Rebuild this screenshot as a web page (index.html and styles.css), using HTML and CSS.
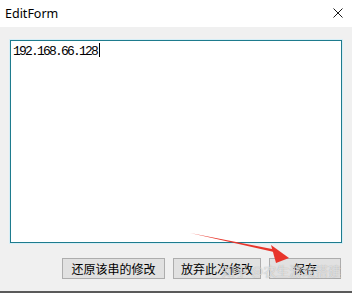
FILE: index.html
```html
<!DOCTYPE HTML>
<html>
<head>
    <meta charset="utf-8">
    <title>EditForm</title>
    <link rel="stylesheet" href="styles.css">
</head>
<body>
<div class="window">
    <div class="titlebar">
        <span class="title">EditForm</span>
        <svg class="close" viewBox="0 0 10 10">
            <path d="M 0.5,0.5 L 9.5,9.5 M 9.5,0.5 L 0.5,9.5"/>
        </svg>
    </div>
    <div class="content">
        <div class="edit">192.168.66.128<span class="caret"></span></div>
        <div class="buttons">
            <button type="button" class="btn btn-restore">还原该串的修改</button>
            <button type="button" class="btn btn-discard">放弃此次修改</button>
            <button type="button" class="btn btn-save">保存</button>
        </div>
    </div>
    <svg class="arrow" viewBox="0 0 352 293">
        <path d="M 190,233 L 274,252 L 274.6,249.6 Z"/>
        <path d="M 289,258 L 271,245 L 276,263 Z"/>
    </svg>
    <div class="watermark">知乎 @农生游戏搭建</div>
</div>
</body>
</html>
```

FILE: styles.css
```css
body, html {
    margin: 0;
    padding: 0;
    background-color: #f0f0f0;
}

.window {
    position: relative;
    width: 352px;
    height: 293px;
    display: flex;
    flex-direction: column;
    background-color: #f0f0f0;
    border-bottom: 2px solid #5a5a5a;
    box-sizing: border-box;
    overflow: hidden;
}

.titlebar {
    height: 27px;
    background-color: #ffffff;
    display: flex;
    align-items: center;
    justify-content: space-between;
    padding: 0 8px 0 5px;
    flex: none;
}

.title {
    font-family: "Noto Sans", "Liberation Sans", sans-serif;
    font-size: 12.5px;
    color: #000000;
    margin-top: -1px;
}

.close {
    width: 10px;
    height: 10px;
    margin-top: -2px;
    margin-right: 1px;
    stroke: #1a1a1a;
    stroke-width: 1;
    fill: none;
}

.content {
    flex: 1;
    display: flex;
    flex-direction: column;
    padding: 13px 10px 0 10px;
}

.edit {
    height: 203px;
    background-color: #ffffff;
    border: 1px solid #1e7b8d;
    box-shadow: 0 0 0 1px #d6eef6;
    box-sizing: border-box;
    padding: 2px 2px;
    font-family: "Liberation Mono", monospace;
    font-size: 13px;
    letter-spacing: -1.8px;
    line-height: 15px;
    color: #000000;
}

.caret {
    display: inline-block;
    width: 1px;
    height: 14px;
    margin-left: 2px;
    vertical-align: -2px;
    background-color: #000000;
}

.buttons {
    display: flex;
    justify-content: flex-end;
    gap: 8px;
    margin-top: 15px;
    padding-right: 1px;
}

.btn {
    height: 21px;
    padding: 0;
    background-color: #e1e1e1;
    border: 1px solid #adadad;
    font-family: "Noto Sans CJK SC", sans-serif;
    font-size: 12px;
    line-height: 18px;
    color: #000000;
}

.btn-restore {
    width: 103px;
}

.btn-discard {
    width: 88px;
}

.btn-save {
    width: 72px;
}

.arrow {
    position: absolute;
    left: 0;
    top: 0;
    width: 352px;
    height: 293px;
    fill: #e8352b;
    pointer-events: none;
}

.watermark {
    position: absolute;
    left: 222px;
    top: 261px;
    font-family: "Noto Sans CJK SC", sans-serif;
    font-size: 13px;
    color: rgba(255, 255, 255, 0.6);
    text-shadow: 0 0 1px rgba(110, 110, 110, 0.6);
    white-space: nowrap;
}
```
